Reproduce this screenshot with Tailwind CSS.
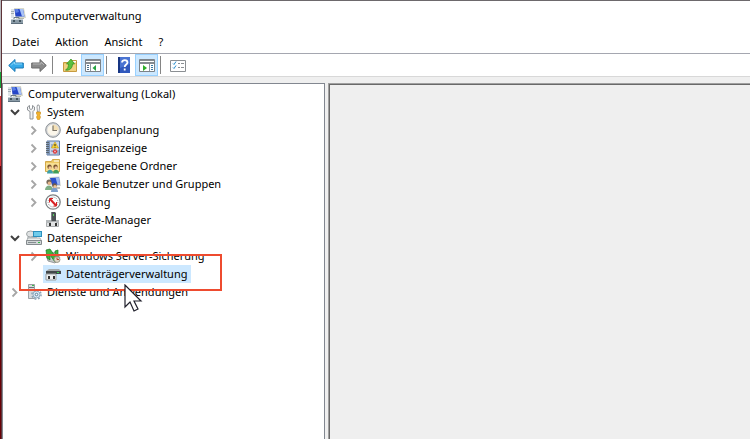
<!DOCTYPE html>
<html lang="de">
<head>
  <meta charset="UTF-8" />
  <meta name="viewport" content="width=device-width, initial-scale=1.0"/>
  <title>Computerverwaltung</title>

  <!-- Tailwind CSS -->
  <script src="https://cdn.jsdelivr.net/npm/@tailwindcss/browser@4"></script>
</head>

<body class="flex h-screen overflow-hidden bg-white font-['Noto_Sans','Open_Sans',sans-serif] text-[11px] text-black">

  <!-- Icons used more than once -->
  <svg class="hidden" aria-hidden="true">
    <symbol id="computer" viewBox="0 0 16 16">
      <path d="M4 0h10l2 10-10 1z" fill="#d9dacb"/>
      <path d="M4.500 1H13l1.500 7.500H5.500z" fill="#2546c8"/>
      <path d="M9.500 1H13l1.500 7.500H12z" fill="#a9c3f7"/>
      <path d="M5 1h3l1 3-3.500 1z" fill="#5b7fe4"/>
      <path d="M9 10h5v1H9z" fill="#b9baae"/>
      <path d="M1 1h3v9H1z" fill="#dfe5e9"/>
      <path d="M1 3.500h3M1 5.500h3" stroke="#a2adb5"/>
      <path d="M4 11V9.500h5V11" fill="none" stroke="#6b7c89"/>
      <path d="M1 11h12v4H1z" fill="#8a9ba7"/>
      <path d="M1 11.500h12" stroke="#c3ced5"/>
      <path d="M3 12h2v2H3zM9 12h2v2H9z" fill="#44555f"/>
      <path d="M1 15h12v1H1z" fill="#5e6f7c"/>
    </symbol>
    <symbol id="open" viewBox="0 0 16 16">
      <path d="M4 6l4 4 4-4" fill="none" stroke="#404040" stroke-width="2"/>
    </symbol>
    <symbol id="closed" viewBox="0 0 16 16">
      <path d="M5.500 4.500l4 4-4 4" fill="none" stroke="#a6a6a6" stroke-width="1.800"/>
    </symbol>
  </svg>

  <!-- Desktop behind the window -->
  <div class="flex w-0.5 shrink-0 flex-col border-r border-[#55555a]/60 bg-[#690006]">
    <div class="h-[72px] bg-[#b8b8bc]"></div>
    <div class="h-4 bg-[#14a038]"></div>
    <div class="h-2 bg-white"></div>
    <div class="h-[70px] bg-[#d8353b]"></div>
  </div>

  <!-- Window -->
  <div class="flex min-w-0 flex-1 flex-col border-t border-[#6d696c]">

    <!-- Title bar -->
    <header class="flex h-[30px] shrink-0 items-center gap-1 pl-2">
      <svg class="size-4"><use href="#computer"/></svg>
      <h1 class="pl-px">Computerverwaltung</h1>
    </header>

    <!-- Menu -->
    <nav class="flex h-[23px] shrink-0 items-center gap-4 border-b border-[#a5a7b0] pl-2.5">
      <button>Datei</button>
      <button>Aktion</button>
      <button>Ansicht</button>
      <button>?</button>
    </nav>

    <!-- Toolbar -->
    <div class="flex h-[23px] shrink-0 items-center border-b border-[#d8d8d8] pl-0.5">
      <button class="flex h-[22px] w-[23px] items-center justify-center" aria-label="Zurück">
        <svg class="size-4" viewBox="0 0 16 16"><path d="M.7 8.500L7 2.500V6h8.300v5H7v3.500z" fill="#35a9e9" stroke="#1878b6"/><path d="M3 8.500L6.500 5v2H14" fill="none" stroke="#8bd7fa"/></svg>
      </button>
      <button class="flex h-[22px] w-[23px] items-center justify-center" aria-label="Vorwärts">
        <svg class="size-4" viewBox="0 0 16 16"><path d="M15.300 8.500L9 2.500V6H.7v5H9v3.500z" fill="#8a8a8a" stroke="#6a6a6a"/><path d="M2 7h8V5l3 3" fill="none" stroke="#b4b4b4"/></svg>
      </button>
      <div class="mr-[5px] ml-0.5 h-[18px] w-px bg-[#858585]"></div>
      <button class="flex h-[22px] w-[23px] items-center justify-center" aria-label="Eine Ebene nach oben">
        <svg class="size-4" viewBox="0 0 16 16"><path d="M1.500 5.500h6l1-2h6v11h-13z" fill="#e7c36c" stroke="#c79b40"/><path d="M2 7h12v7H2z" fill="#f0d080"/><path d="M10 4h4v1.500h-4z" fill="#fff"/><path d="M3.500 13c2.500-1 3-4 3-6H4.500L9 2l3.500 5h-2c0 4-3 7-7 6z" fill="#5cc03f" stroke="#2f8f1c" stroke-width=".7"/></svg>
      </button>
      <button class="flex h-[22px] w-[23px] items-center justify-center border border-[#99d1ff] bg-[#cce8ff]" aria-label="Konsolenstruktur ein-/ausblenden">
        <svg class="mt-0.5 h-3.5 w-4 shrink-0" viewBox="0 0 16 14"><path d="M.5.500h15v12H.5z" fill="#fff" stroke="#7c8288"/><path d="M1 1h14v1H1zM1 3h14v2H1z" fill="#858b91"/><path d="M1 2.500h9M11 2.500h1M13 2.500h1" stroke="#fff"/><path d="M5.500 5v7" stroke="#8c969e"/><path d="M2 6.500h2M2 8.500h2M2 10.500h2" stroke="#4a6f8c"/><path d="M11 6v6L7.500 9z" fill="#25a343"/></svg>
      </button>
      <div class="mr-[5px] ml-0.5 h-[18px] w-px bg-[#858585]"></div>
      <button class="flex h-[22px] w-[23px] items-center justify-center" aria-label="Hilfe">
        <svg class="size-4" viewBox="0 0 16 16"><path d="M2 0h12v16H2z" fill="#3159bd"/><path d="M2 0h2v16H2z" fill="#173583"/><path d="M4 0h10v7L4 11z" fill="#4a74d2"/><path d="M6 5.500c0-3.300 5.500-3.300 5.500 0 0 2-2.800 2-2.800 4.500M8.700 11.500v2" fill="none" stroke="#fff" stroke-width="1.800"/></svg>
      </button>
      <button class="flex h-[22px] w-[23px] items-center justify-center border border-[#99d1ff] bg-[#cce8ff]" aria-label="Aktionsbereich ein-/ausblenden">
        <svg class="mt-0.5 h-3.5 w-4 shrink-0" viewBox="0 0 16 14"><path d="M.5.500h15v12H.5z" fill="#fff" stroke="#7c8288"/><path d="M1 1h14v1H1zM1 3h14v2H1z" fill="#858b91"/><path d="M1 2.500h9M11 2.500h1M13 2.500h1" stroke="#fff"/><path d="M10.500 5v7" stroke="#8c969e"/><path d="M12 6.500h2M12 8.500h2M12 10.500h2" stroke="#397aa6"/><path d="M4 6v6l4-3z" fill="#2dad29"/></svg>
      </button>
      <div class="mr-[5px] ml-0.5 h-[18px] w-px bg-[#858585]"></div>
      <button class="flex h-[22px] w-[23px] items-center justify-center" aria-label="Eigenschaften">
        <svg class="size-4" viewBox="0 0 16 16"><path d="M.5 3.500h15v11H.5z" fill="#fff" stroke="#8b8f93"/><path d="M3 6.500l1 1 2-3M3 10.500l1 1 2-3" fill="none" stroke="#258ed0"/><path d="M8 6.500h2M11 6.500h3M8 10.500h2M11 10.500h3" stroke="#8b8f93"/></svg>
      </button>
    </div>

    <!-- Panes -->
    <main class="flex min-h-0 flex-1 bg-[#efefef] pt-1.5">

      <!-- Console tree -->
      <section class="relative w-[323px] shrink-0 border-x border-t border-[#828790] bg-white pt-px pl-1 whitespace-nowrap">
        <button class="flex h-[18px] items-center gap-[5px]">
          <svg class="size-4"><use href="#computer"/></svg>
          Computerverwaltung (Lokal)
        </button>

        <ul>
          <li>
            <button class="flex h-[18px] items-center gap-[5px]">
              <svg class="-mr-[2px] size-4"><use href="#open"/></svg>
              <svg class="size-4" viewBox="0 0 16 16"><path d="M3.500 1.500v3L5 5.500l1.500-1v-3L8.500 3v3L7 7.500V15H4V7.500L1.500 6V3z" fill="#f1f2f3" stroke="#85898d" stroke-width=".9"/><path d="M11.500 1h1.500l.5 2-.5 5h-1.500l-.5-5z" fill="#fff" stroke="#85898d" stroke-width=".8"/><path d="M10.500 8h4v2l-1 1 1 2-1 2.500h-2l-1-2.500 1-2-1-1z" fill="#f2b22c" stroke="#c98a10" stroke-width=".6"/></svg>
              System
            </button>
            <ul class="pl-[19px]">
              <li>
                <button class="flex h-[18px] items-center gap-[5px]">
                  <svg class="-mr-[2px] size-4"><use href="#closed"/></svg>
                  <svg class="size-4" viewBox="0 0 16 16"><circle cx="8" cy="8" r="7.300" fill="#d4d6d8" stroke="#8d9296"/><circle cx="8" cy="8" r="5.600" fill="#fbf6ea"/><path d="M8 8V2.400A5.600 5.600 0 0 1 13.600 8z" fill="#f3dfb4"/><path d="M8 3.500v5h4" fill="none" stroke="#7b7468" stroke-width="1.200"/></svg>
                  Aufgabenplanung
                </button>
              </li>
              <li>
                <button class="flex h-[18px] items-center gap-[5px]">
                  <svg class="-mr-[2px] size-4"><use href="#closed"/></svg>
                  <svg class="size-4" viewBox="0 0 16 16"><path d="M2 1h12.500v14H2z" fill="#c9d6ea" stroke="#5c7ba8"/><path d="M2 1h3v14H2z" fill="#7d95b8"/><path d="M1 2.500h3M1 4.500h3M1 6.500h3M1 8.500h3M1 10.500h3M1 12.500h3" stroke="#5b666e"/><path d="M6 5h2M6 7h1M6 11h2M12 11h2M12 13h2" stroke="#6f88ad"/><path d="M10 2l3.500 6h-7z" fill="#f9d436" stroke="#c99b10" stroke-width=".6"/><path d="M10 4v2M10 6.800v.7" stroke="#222"/><circle cx="10" cy="11.500" r="2.300" fill="#d42e34"/><path d="M9 10.500l2 2M11 10.500l-2 2" stroke="#fff" stroke-width=".7"/></svg>
                  Ereignisanzeige
                </button>
              </li>
              <li>
                <button class="flex h-[18px] items-center gap-[5px]">
                  <svg class="-mr-[2px] size-4"><use href="#closed"/></svg>
                  <svg class="size-4" viewBox="0 0 16 16"><path d="M.5 3.500h6l1-2h7v12H.5z" fill="#edc965" stroke="#d3a94a"/><path d="M1 5h13v8H1z" fill="#f8df92"/><path d="M9 3h5" stroke="#fff"/><path d="M2 15.500c0-5 6-5 6 0z" fill="#3f9fa8"/><path d="M8 15.500c0-5 6-5 6 0z" fill="#429f58"/><circle cx="4.500" cy="8.800" r="2.200" fill="#7b5733"/><circle cx="10.500" cy="8.800" r="2.200" fill="#7b5733"/><circle cx="5" cy="9.800" r="1.500" fill="#efc59b"/><circle cx="11" cy="9.800" r="1.500" fill="#efc59b"/></svg>
                  Freigegebene Ordner
                </button>
              </li>
              <li>
                <button class="flex h-[18px] items-center gap-[5px]">
                  <svg class="-mr-[2px] size-4"><use href="#closed"/></svg>
                  <svg class="size-4" viewBox="0 0 16 16"><path d="M4 1l10.500-.5L16 10l-9 1z" fill="#d6d8d0"/><path d="M5 2l9-.5 1 7L7 9z" fill="#2b4fca"/><path d="M10.500 1.500H14l1 7h-2.500z" fill="#9ab7f3"/><path d="M10 11h5v2h-5z" fill="#bcbeb8"/><path d="M0 14c0-6 8-6 8 0z" fill="#7fae86"/><path d="M6 16c0-6 7-6 7 0z" fill="#7d9fcb"/><circle cx="4" cy="6" r="2.600" fill="#77695a"/><circle cx="4.500" cy="7.200" r="1.800" fill="#e6b68b"/><circle cx="9.500" cy="9.500" r="2.300" fill="#6f5c49"/><circle cx="10" cy="10.500" r="1.600" fill="#efc59c"/></svg>
                  Lokale Benutzer und Gruppen
                </button>
              </li>
              <li>
                <button class="flex h-[18px] items-center gap-[5px]">
                  <svg class="-mr-[2px] size-4"><use href="#closed"/></svg>
                  <svg class="size-4" viewBox="0 0 16 16"><circle cx="8" cy="8" r="7.200" fill="#fff" stroke="#7d8284" stroke-width="1.300"/><circle cx="8" cy="8" r="4.900" fill="none" stroke="#8b8e91" stroke-dasharray="1 1"/><path d="M5 5l6 6.500" stroke="#d92023" stroke-width="2"/><path d="M4.500 8.500V4.500H8M11.500 8v4H8.500" fill="none" stroke="#d92023" stroke-width="1"/></svg>
                  Leistung
                </button>
              </li>
              <li>
                <button class="flex h-[18px] items-center gap-[5px]">
                  <span class="-mr-[2px] size-4"></span>
                  <svg class="size-4" viewBox="0 0 16 16"><path d="M6 0h4l1 1v8H6z" fill="#4c5154"/><path d="M6 0h1v9H6z" fill="#7b8083"/><path d="M8 2h1v2H8z" fill="#55d45d"/><path d="M1.500 9.500h12v5h-12z" fill="#e0e2e3" stroke="#a8abad"/><path d="M1 8h5v3H1zM11 8h3v3h-3z" fill="#b4b8ba"/><path d="M4 11h2v3H4zM10 11h2v3h-2z" fill="#333"/></svg>
                  Geräte-Manager
                </button>
              </li>
            </ul>
          </li>

          <li>
            <button class="flex h-[18px] items-center gap-[5px]">
              <svg class="-mr-[2px] size-4"><use href="#open"/></svg>
              <svg class="size-4" viewBox="0 0 16 16"><ellipse cx="4.500" cy="4" rx="4" ry="3" fill="#dfe2e3" stroke="#8d9396" stroke-width=".8"/><path d="M1 7h10v2H1z" fill="#c5cacc"/><path d="M7 1h9v6H7z" fill="#2b8fbd"/><path d="M8 2h7v4H8z" fill="#6fcbea"/><path d="M2 8h12l1.500 3H.5z" fill="#eceeed" stroke="#94999b" stroke-width=".7"/><path d="M.5 10.500h15v4H.5z" fill="#d1d5d6" stroke="#858b8e"/><path d="M2 12.500h8" stroke="#858d91"/><path d="M12 12h2v1h-2z" fill="#31bb46"/></svg>
              Datenspeicher
            </button>
            <ul class="pl-[19px]">
              <li>
                <button class="flex h-[18px] items-center gap-[5px]">
                  <svg class="-mr-[2px] size-4"><use href="#closed"/></svg>
                  <svg class="size-4" viewBox="0 0 16 16"><path d="M1 7l10-3 4 6-5 5-7-2z" fill="#c3c8c9" stroke="#868c8e" stroke-width=".8"/><path d="M1 2l4-1 5 7V3l3-1v10l-3 2-5-7v5l-3-2z" fill="#3fb23a" stroke="#1c7722" stroke-width=".7"/><circle cx="12" cy="11.500" r="3" fill="#ddd6c6" stroke="#8b8b7b" stroke-width=".8"/><path d="M12 9.500v2h2" fill="none" stroke="#ba4332"/></svg>
                  Windows Server-Sicherung
                </button>
              </li>
              <li>
                <button class="flex h-[18px] items-center gap-[3px]" aria-current="true">
                  <span class="-mr-0.5 size-4"></span>
                  <span class="flex h-[18px] items-center gap-[5px] bg-[#cce8ff] pr-1 pl-0.5">
                    <svg class="size-4" viewBox="0 0 16 16"><path d="M4 3h10l2 2H1z" fill="#a4a9ab"/><path d="M1 5h15v3H1z" fill="#42484a"/><path d="M12 6h2v1h-2z" fill="#38d250"/><path d="M1 8h10v6H1z" fill="#eceeef" stroke="#9a9fa1"/><path d="M3 10h2v3H3zM8 10h2v3H8z" fill="#333"/></svg>
                    Datenträgerverwaltung
                  </span>
                </button>
              </li>
            </ul>
          </li>

          <li>
            <button class="flex h-[18px] items-center gap-[5px]">
              <svg class="-mr-[2px] size-4"><use href="#closed"/></svg>
              <svg class="size-4" viewBox="0 0 16 16"><path d="M2.500.500h6v14h-6z" fill="#d8dbde" stroke="#9ba0a4"/><path d="M3 3.500h5M3 6.500h5" stroke="#6c7478"/><path d="M6 1h2v1H6z" fill="#38bb48"/><circle cx="10.500" cy="10.500" r="4.600" fill="none" stroke="#8aa3b5" stroke-width="1.500" stroke-dasharray="1.800 1.800"/><circle cx="10.500" cy="10.500" r="3.500" fill="#d8e8f4" stroke="#8fa9bc"/><circle cx="10.500" cy="10.500" r="1.300" fill="#fff" stroke="#5d8099"/></svg>
              Dienste und Anwendungen
            </button>
          </li>
        </ul>

        <!-- Marker and pointer over the tree -->
        <div class="pointer-events-none absolute top-[170px] left-4 h-[37px] w-[203px] border-2 border-[#ee4b2f]"></div>
        <svg class="pointer-events-none absolute top-[200px] left-[121px] h-7 w-5" viewBox="0 0 20 28"><path d="M1 1v22l5-5 4 9 4-2-4-8h7z" fill="#fff" stroke="#20202c" stroke-width="1.200"/></svg>
      </section>

      <!-- Result pane -->
      <section class="ml-[3px] min-w-0 flex-1 border-t border-l border-[#a0a0a0]">
        <div class="h-full border-t border-l border-[#696969]"></div>
      </section>
    </main>
  </div>

</body>
</html>
